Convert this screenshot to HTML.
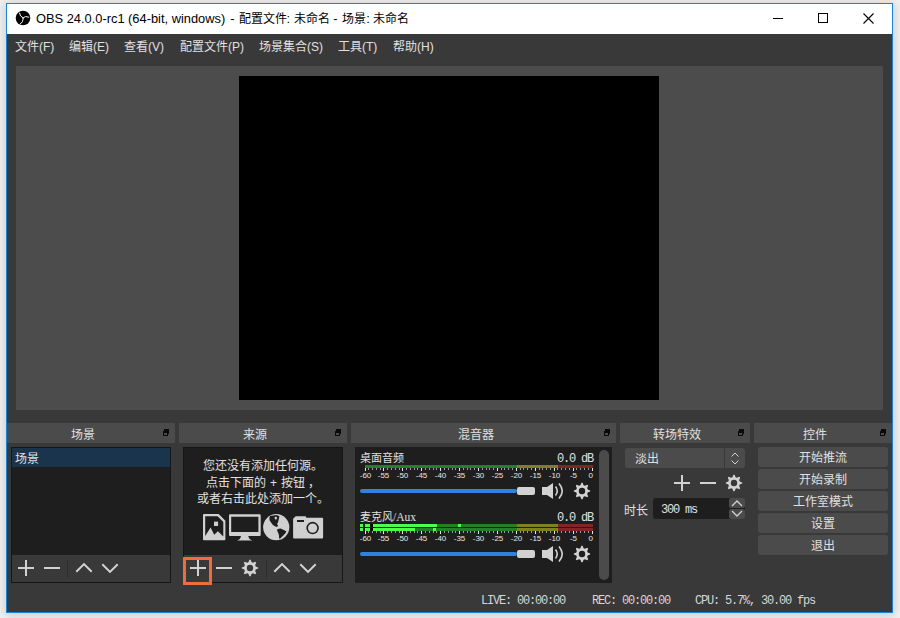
<!DOCTYPE html>
<html lang="zh-CN">
<head>
<meta charset="utf-8">
<style>
*{margin:0;padding:0;box-sizing:border-box;}
html,body{width:900px;height:618px;overflow:hidden;}
body{background:#f0f0f0;font-family:"Liberation Sans",sans-serif;font-size:12px;color:#e1e0e1;position:relative;}
.a{position:absolute;white-space:nowrap;}
#win{left:6px;top:3px;width:887px;height:610px;border:1px solid #1883d7;background:#3a393a;box-shadow:0 1px 9px 1px rgba(0,0,0,0.16);}
#title{left:7px;top:4px;width:885px;height:30px;background:#fff;color:#000;}
#title .t{left:29px;top:5px;font-size:12.85px;}
#title .c{font-size:12px;}
.menu{top:36.5px;font-size:12px;color:#e1e0e1;}
#pv{left:16px;top:66px;width:867px;height:344px;background:#4c4c4c;}
#pvb{left:239px;top:76px;width:420px;height:324px;background:#000;}
.dt{top:423px;height:20px;background:#4b4b4b;font-size:12px;color:#e1e0e1;}
.dt span{position:absolute;left:0;right:16px;top:2px;text-align:center;}
.list{top:447px;height:136px;background:#1f1e1f;border:1px solid #161616;}
.tb{top:555px;height:28px;background:#3a393a;border:1px solid #161616;border-top:none;}
.btn{left:758px;width:130px;height:20px;background:#4b4b4b;border-radius:3px;text-align:center;line-height:23px;color:#e1e0e1;}
.mono{font-family:"Liberation Mono",monospace;}
.st{top:594px;font-size:12px;letter-spacing:-1.2px;color:#d6d6d6;}
svg.full{position:absolute;left:0;top:0;}
svg text{font-family:"Liberation Sans",sans-serif;}
.src{left:183px;width:160px;text-align:center;font-size:12px;color:#e1e0e1;}
</style>
</head>
<body>
<div class="a" id="win"></div>
<div class="a" id="title">
  <div class="a t">OBS 24.0.0-rc1 (64-bit, windows) <span style="margin-left:1.5px">-</span> <span class="c" style="margin-left:0.5px">配置文件</span>: <span class="c">未命名</span> - <span class="c" style="margin-left:1px">场景</span>: <span class="c">未命名</span></div>
</div>
<div class="a menu" style="left:15px">文件(F)</div>
<div class="a menu" style="left:69px">编辑(E)</div>
<div class="a menu" style="left:124px">查看(V)</div>
<div class="a menu" style="left:180px">配置文件(P)</div>
<div class="a menu" style="left:259px">场景集合(S)</div>
<div class="a menu" style="left:338px">工具(T)</div>
<div class="a menu" style="left:393px">帮助(H)</div>

<div class="a" id="pv"></div>
<div class="a" id="pvb"></div>

<!-- dock titles -->
<div class="a dt" style="left:7px;width:168px"><span>场景</span></div>
<div class="a dt" style="left:179px;width:168px"><span>来源</span></div>
<div class="a dt" style="left:351px;width:265px"><span>混音器</span></div>
<div class="a dt" style="left:620px;width:130px"><span>转场特效</span></div>
<div class="a dt" style="left:754px;width:138px"><span>控件</span></div>

<!-- scenes -->
<div class="a list" style="left:11px;width:160px"></div>
<div class="a" style="left:12px;top:448px;width:158px;height:19px;background:#19344c"></div>
<div class="a" style="left:15px;top:449px">场景</div>
<div class="a tb" style="left:11px;width:160px"></div>

<!-- sources -->
<div class="a list" style="left:183px;width:160px"></div>
<div class="a tb" style="left:183px;width:160px"></div>
<div class="a src" style="top:456px">您还没有添加任何源。</div>
<div class="a src" style="top:473px">点击下面的<span style="margin:0 1px"> + </span>按钮<span style="margin-left:3px">，</span></div>
<div class="a src" style="top:489px">或者右击此处添加一个。</div>

<!-- mixer -->
<div class="a list" style="left:355px;width:257px;height:136px;border:none"></div>
<div class="a" style="left:599px;top:450px;width:10px;height:130px;border-radius:5px;background:#4b4b4b"></div>
<div class="a" style="left:360px;top:449px;font-size:11px">桌面音频</div>
<div class="a" style="left:360px;top:508px;font-size:11px">麦克风<span style="font-family:'Liberation Serif',serif;font-size:11.5px">/Aux</span></div>
<div class="a mono" style="left:557px;top:451.5px;font-size:12px;letter-spacing:-1.2px">0.0 dB</div>
<div class="a mono" style="left:557px;top:510.5px;font-size:12px;letter-spacing:-1.2px">0.0 dB</div>

<!-- transitions -->
<div class="a" style="left:625px;top:448px;width:120px;height:20px;background:#4b4b4b;border-radius:3px"></div>
<div class="a" style="left:724px;top:448px;width:1px;height:20px;background:#3a393a"></div>
<div class="a" style="left:635px;top:449px">淡出</div>
<div class="a" style="left:624px;top:501px">时长</div>
<div class="a" style="left:653px;top:498px;width:92px;height:21px;background:#1f1e1f;border-radius:3px"></div>
<div class="a" style="left:729px;top:498px;width:16px;height:10px;background:#4b4b4b;border-radius:2px"></div>
<div class="a" style="left:729px;top:509px;width:16px;height:10px;background:#4b4b4b;border-radius:2px"></div>
<div class="a mono" style="left:661px;top:503px;font-size:12px;letter-spacing:-1.2px">300 ms</div>

<!-- controls -->
<div class="a btn" style="top:447px">开始推流</div>
<div class="a btn" style="top:469px">开始录制</div>
<div class="a btn" style="top:491px">工作室模式</div>
<div class="a btn" style="top:513px">设置</div>
<div class="a btn" style="top:535px">退出</div>

<div class="a mono st" style="left:481px">LIVE: 00:00:00</div>
<div class="a mono st" style="left:592px">REC: 00:00:00</div>
<div class="a mono st" style="left:695px">CPU: 5.7%, 30.00 fps</div>

<!-- orange highlight -->
<div class="a" style="left:183px;top:557px;width:29px;height:28px;border:3px solid #f26b3a"></div>

<svg class="full" width="900" height="618" viewBox="0 0 900 618">
  <!-- obs logo -->
  <circle cx="23" cy="18" r="7.3" fill="#000"/>
  <g stroke="#fff" stroke-width="1" fill="none" stroke-linecap="round">
    <path d="M23 17.9 Q19.9 16.6 19.4 13"/>
    <path d="M23 17.9 Q25 15.4 28.8 17.1"/>
    <path d="M23 17.9 Q23.5 22.4 20.2 23.9"/>
  </g>
  <!-- window buttons -->
  <rect x="773" y="18" width="10" height="1" fill="#000"/>
  <rect x="818.5" y="13.5" width="9" height="9" fill="none" stroke="#000"/>
  <path d="M863.5 13.5L873.5 23.5M873.5 13.5L863.5 23.5" stroke="#000" stroke-width="1.1"/>
  <!-- float icons -->
  <g fill="#0a0a0a">
    <rect x="164" y="429" width="5" height="2"/><rect x="168" y="429" width="1" height="5"/>
    <path d="M163 431h5v5h-5Z M164 433v2h3v-2Z" fill-rule="evenodd"/>
    <rect x="336" y="429" width="5" height="2"/><rect x="340" y="429" width="1" height="5"/>
    <path d="M335 431h5v5h-5Z M336 433v2h3v-2Z" fill-rule="evenodd"/>
    <rect x="605" y="429" width="5" height="2"/><rect x="609" y="429" width="1" height="5"/>
    <path d="M604 431h5v5h-5Z M605 433v2h3v-2Z" fill-rule="evenodd"/>
    <rect x="739" y="429" width="5" height="2"/><rect x="743" y="429" width="1" height="5"/>
    <path d="M738 431h5v5h-5Z M739 433v2h3v-2Z" fill-rule="evenodd"/>
    <rect x="881" y="429" width="5" height="2"/><rect x="885" y="429" width="1" height="5"/>
    <path d="M880 431h5v5h-5Z M881 433v2h3v-2Z" fill-rule="evenodd"/>
  </g>
  <!-- mixer -->
  <g font-size="8" fill="#e6e6e6">
  <rect x="365" y="465" width="152" height="3" fill="#267f26"/>
<rect x="517" y="465" width="41" height="3" fill="#7f7f26"/>
<rect x="558" y="465" width="35" height="3" fill="#7f2626"/>
<rect x="365" y="468" width="1" height="3" fill="#e6e6e6"/>
<rect x="368" y="468" width="1" height="2" fill="#9a9a9a"/>
<rect x="372" y="468" width="1" height="2" fill="#9a9a9a"/>
<rect x="376" y="468" width="1" height="2" fill="#9a9a9a"/>
<rect x="380" y="468" width="1" height="2" fill="#9a9a9a"/>
<rect x="383" y="468" width="1" height="3" fill="#e6e6e6"/>
<rect x="387" y="468" width="1" height="2" fill="#9a9a9a"/>
<rect x="391" y="468" width="1" height="2" fill="#9a9a9a"/>
<rect x="395" y="468" width="1" height="2" fill="#9a9a9a"/>
<rect x="399" y="468" width="1" height="2" fill="#9a9a9a"/>
<rect x="402" y="468" width="1" height="3" fill="#e6e6e6"/>
<rect x="406" y="468" width="1" height="2" fill="#9a9a9a"/>
<rect x="410" y="468" width="1" height="2" fill="#9a9a9a"/>
<rect x="414" y="468" width="1" height="2" fill="#9a9a9a"/>
<rect x="417" y="468" width="1" height="2" fill="#9a9a9a"/>
<rect x="421" y="468" width="1" height="3" fill="#e6e6e6"/>
<rect x="425" y="468" width="1" height="2" fill="#9a9a9a"/>
<rect x="429" y="468" width="1" height="2" fill="#9a9a9a"/>
<rect x="433" y="468" width="1" height="2" fill="#9a9a9a"/>
<rect x="436" y="468" width="1" height="2" fill="#9a9a9a"/>
<rect x="440" y="468" width="1" height="3" fill="#e6e6e6"/>
<rect x="444" y="468" width="1" height="2" fill="#9a9a9a"/>
<rect x="448" y="468" width="1" height="2" fill="#9a9a9a"/>
<rect x="452" y="468" width="1" height="2" fill="#9a9a9a"/>
<rect x="455" y="468" width="1" height="2" fill="#9a9a9a"/>
<rect x="459" y="468" width="1" height="3" fill="#e6e6e6"/>
<rect x="463" y="468" width="1" height="2" fill="#9a9a9a"/>
<rect x="467" y="468" width="1" height="2" fill="#9a9a9a"/>
<rect x="470" y="468" width="1" height="2" fill="#9a9a9a"/>
<rect x="474" y="468" width="1" height="2" fill="#9a9a9a"/>
<rect x="478" y="468" width="1" height="3" fill="#e6e6e6"/>
<rect x="482" y="468" width="1" height="2" fill="#9a9a9a"/>
<rect x="486" y="468" width="1" height="2" fill="#9a9a9a"/>
<rect x="489" y="468" width="1" height="2" fill="#9a9a9a"/>
<rect x="493" y="468" width="1" height="2" fill="#9a9a9a"/>
<rect x="497" y="468" width="1" height="3" fill="#e6e6e6"/>
<rect x="501" y="468" width="1" height="2" fill="#9a9a9a"/>
<rect x="504" y="468" width="1" height="2" fill="#9a9a9a"/>
<rect x="508" y="468" width="1" height="2" fill="#9a9a9a"/>
<rect x="512" y="468" width="1" height="2" fill="#9a9a9a"/>
<rect x="516" y="468" width="1" height="3" fill="#e6e6e6"/>
<rect x="520" y="468" width="1" height="2" fill="#9a9a9a"/>
<rect x="523" y="468" width="1" height="2" fill="#9a9a9a"/>
<rect x="527" y="468" width="1" height="2" fill="#9a9a9a"/>
<rect x="531" y="468" width="1" height="2" fill="#9a9a9a"/>
<rect x="535" y="468" width="1" height="3" fill="#e6e6e6"/>
<rect x="539" y="468" width="1" height="2" fill="#9a9a9a"/>
<rect x="542" y="468" width="1" height="2" fill="#9a9a9a"/>
<rect x="546" y="468" width="1" height="2" fill="#9a9a9a"/>
<rect x="550" y="468" width="1" height="2" fill="#9a9a9a"/>
<rect x="554" y="468" width="1" height="3" fill="#e6e6e6"/>
<rect x="557" y="468" width="1" height="2" fill="#9a9a9a"/>
<rect x="561" y="468" width="1" height="2" fill="#9a9a9a"/>
<rect x="565" y="468" width="1" height="2" fill="#9a9a9a"/>
<rect x="569" y="468" width="1" height="2" fill="#9a9a9a"/>
<rect x="573" y="468" width="1" height="3" fill="#e6e6e6"/>
<rect x="576" y="468" width="1" height="2" fill="#9a9a9a"/>
<rect x="580" y="468" width="1" height="2" fill="#9a9a9a"/>
<rect x="584" y="468" width="1" height="2" fill="#9a9a9a"/>
<rect x="588" y="468" width="1" height="2" fill="#9a9a9a"/>
<rect x="592" y="468" width="1" height="3" fill="#e6e6e6"/>
<text x="365.5" y="478" text-anchor="middle">-60</text>
<text x="383.5" y="478" text-anchor="middle">-55</text>
<text x="402.5" y="478" text-anchor="middle">-50</text>
<text x="421.5" y="478" text-anchor="middle">-45</text>
<text x="440.5" y="478" text-anchor="middle">-40</text>
<text x="459.5" y="478" text-anchor="middle">-35</text>
<text x="478.5" y="478" text-anchor="middle">-30</text>
<text x="497.5" y="478" text-anchor="middle">-25</text>
<text x="516.5" y="478" text-anchor="middle">-20</text>
<text x="535.5" y="478" text-anchor="middle">-15</text>
<text x="554.5" y="478" text-anchor="middle">-10</text>
<text x="573.5" y="478" text-anchor="middle">-5</text>
<text x="593" y="478" text-anchor="end">0</text>
<rect x="365" y="524" width="152" height="3" fill="#267f26"/>
<rect x="517" y="524" width="41" height="3" fill="#7f7f26"/>
<rect x="558" y="524" width="35" height="3" fill="#7f2626"/>
<rect x="365" y="528" width="152" height="3" fill="#267f26"/>
<rect x="517" y="528" width="41" height="3" fill="#7f7f26"/>
<rect x="558" y="528" width="35" height="3" fill="#7f2626"/>
<rect x="373" y="524" width="64" height="3" fill="#4cff4c"/>
<rect x="373" y="528" width="42" height="3" fill="#4cff4c"/>
<rect x="458" y="524" width="3" height="3" fill="#4cff4c"/>
<rect x="433" y="528" width="3" height="3" fill="#4cff4c"/>
<rect x="365" y="524" width="5" height="3" fill="#4cff4c"/>
<rect x="365" y="528" width="5" height="3" fill="#4cff4c"/>
<rect x="370" y="524" width="3" height="3" fill="#000000"/>
<rect x="370" y="528" width="3" height="3" fill="#000000"/>
<rect x="360" y="524" width="3" height="3" fill="#4cff4c"/>
<rect x="360" y="528" width="3" height="3" fill="#4cff4c"/>
<rect x="365" y="531" width="1" height="3" fill="#e6e6e6"/>
<rect x="368" y="531" width="1" height="2" fill="#9a9a9a"/>
<rect x="372" y="531" width="1" height="2" fill="#9a9a9a"/>
<rect x="376" y="531" width="1" height="2" fill="#9a9a9a"/>
<rect x="380" y="531" width="1" height="2" fill="#9a9a9a"/>
<rect x="383" y="531" width="1" height="3" fill="#e6e6e6"/>
<rect x="387" y="531" width="1" height="2" fill="#9a9a9a"/>
<rect x="391" y="531" width="1" height="2" fill="#9a9a9a"/>
<rect x="395" y="531" width="1" height="2" fill="#9a9a9a"/>
<rect x="399" y="531" width="1" height="2" fill="#9a9a9a"/>
<rect x="402" y="531" width="1" height="3" fill="#e6e6e6"/>
<rect x="406" y="531" width="1" height="2" fill="#9a9a9a"/>
<rect x="410" y="531" width="1" height="2" fill="#9a9a9a"/>
<rect x="414" y="531" width="1" height="2" fill="#9a9a9a"/>
<rect x="417" y="531" width="1" height="2" fill="#9a9a9a"/>
<rect x="421" y="531" width="1" height="3" fill="#e6e6e6"/>
<rect x="425" y="531" width="1" height="2" fill="#9a9a9a"/>
<rect x="429" y="531" width="1" height="2" fill="#9a9a9a"/>
<rect x="433" y="531" width="1" height="2" fill="#9a9a9a"/>
<rect x="436" y="531" width="1" height="2" fill="#9a9a9a"/>
<rect x="440" y="531" width="1" height="3" fill="#e6e6e6"/>
<rect x="444" y="531" width="1" height="2" fill="#9a9a9a"/>
<rect x="448" y="531" width="1" height="2" fill="#9a9a9a"/>
<rect x="452" y="531" width="1" height="2" fill="#9a9a9a"/>
<rect x="455" y="531" width="1" height="2" fill="#9a9a9a"/>
<rect x="459" y="531" width="1" height="3" fill="#e6e6e6"/>
<rect x="463" y="531" width="1" height="2" fill="#9a9a9a"/>
<rect x="467" y="531" width="1" height="2" fill="#9a9a9a"/>
<rect x="470" y="531" width="1" height="2" fill="#9a9a9a"/>
<rect x="474" y="531" width="1" height="2" fill="#9a9a9a"/>
<rect x="478" y="531" width="1" height="3" fill="#e6e6e6"/>
<rect x="482" y="531" width="1" height="2" fill="#9a9a9a"/>
<rect x="486" y="531" width="1" height="2" fill="#9a9a9a"/>
<rect x="489" y="531" width="1" height="2" fill="#9a9a9a"/>
<rect x="493" y="531" width="1" height="2" fill="#9a9a9a"/>
<rect x="497" y="531" width="1" height="3" fill="#e6e6e6"/>
<rect x="501" y="531" width="1" height="2" fill="#9a9a9a"/>
<rect x="504" y="531" width="1" height="2" fill="#9a9a9a"/>
<rect x="508" y="531" width="1" height="2" fill="#9a9a9a"/>
<rect x="512" y="531" width="1" height="2" fill="#9a9a9a"/>
<rect x="516" y="531" width="1" height="3" fill="#e6e6e6"/>
<rect x="520" y="531" width="1" height="2" fill="#9a9a9a"/>
<rect x="523" y="531" width="1" height="2" fill="#9a9a9a"/>
<rect x="527" y="531" width="1" height="2" fill="#9a9a9a"/>
<rect x="531" y="531" width="1" height="2" fill="#9a9a9a"/>
<rect x="535" y="531" width="1" height="3" fill="#e6e6e6"/>
<rect x="539" y="531" width="1" height="2" fill="#9a9a9a"/>
<rect x="542" y="531" width="1" height="2" fill="#9a9a9a"/>
<rect x="546" y="531" width="1" height="2" fill="#9a9a9a"/>
<rect x="550" y="531" width="1" height="2" fill="#9a9a9a"/>
<rect x="554" y="531" width="1" height="3" fill="#e6e6e6"/>
<rect x="557" y="531" width="1" height="2" fill="#9a9a9a"/>
<rect x="561" y="531" width="1" height="2" fill="#9a9a9a"/>
<rect x="565" y="531" width="1" height="2" fill="#9a9a9a"/>
<rect x="569" y="531" width="1" height="2" fill="#9a9a9a"/>
<rect x="573" y="531" width="1" height="3" fill="#e6e6e6"/>
<rect x="576" y="531" width="1" height="2" fill="#9a9a9a"/>
<rect x="580" y="531" width="1" height="2" fill="#9a9a9a"/>
<rect x="584" y="531" width="1" height="2" fill="#9a9a9a"/>
<rect x="588" y="531" width="1" height="2" fill="#9a9a9a"/>
<rect x="592" y="531" width="1" height="3" fill="#e6e6e6"/>
<text x="365.5" y="541" text-anchor="middle">-60</text>
<text x="383.5" y="541" text-anchor="middle">-55</text>
<text x="402.5" y="541" text-anchor="middle">-50</text>
<text x="421.5" y="541" text-anchor="middle">-45</text>
<text x="440.5" y="541" text-anchor="middle">-40</text>
<text x="459.5" y="541" text-anchor="middle">-35</text>
<text x="478.5" y="541" text-anchor="middle">-30</text>
<text x="497.5" y="541" text-anchor="middle">-25</text>
<text x="516.5" y="541" text-anchor="middle">-20</text>
<text x="535.5" y="541" text-anchor="middle">-15</text>
<text x="554.5" y="541" text-anchor="middle">-10</text>
<text x="573.5" y="541" text-anchor="middle">-5</text>
<text x="593" y="541" text-anchor="end">0</text>
  </g>
  <rect x="360" y="489" width="157" height="4" rx="2" fill="#2d83de"/>
  <rect x="517" y="487" width="18" height="8" rx="2" fill="#d2d2d2"/>
  <rect x="360" y="552" width="157" height="4" rx="2" fill="#2d83de"/>
  <rect x="517" y="550" width="18" height="8" rx="2" fill="#d2d2d2"/>
  <path d="M542 487H547L553 483V499L547 495H542Z" fill="#d2d2d2"/><path d="M555.5 486.5Q559 491 555.5 495.5" fill="none" stroke="#d2d2d2" stroke-width="1.6"/><path d="M559 483.5Q565.5 491 559 498.5" fill="none" stroke="#d2d2d2" stroke-width="1.6"/>
  <path d="M542 550H547L553 546V562L547 558H542Z" fill="#d2d2d2"/><path d="M555.5 549.5Q559 554 555.5 558.5" fill="none" stroke="#d2d2d2" stroke-width="1.6"/><path d="M559 546.5Q565.5 554 559 561.5" fill="none" stroke="#d2d2d2" stroke-width="1.6"/>
  <path d="M580.40 485.32 L581.42 482.82 L582.58 482.82 L583.60 485.32 L584.88 485.85 L587.37 484.81 L588.19 485.63 L587.15 488.12 L587.68 489.40 L590.18 490.42 L590.18 491.58 L587.68 492.60 L587.15 493.88 L588.19 496.37 L587.37 497.19 L584.88 496.15 L583.60 496.68 L582.58 499.18 L581.42 499.18 L580.40 496.68 L579.12 496.15 L576.63 497.19 L575.81 496.37 L576.85 493.88 L576.32 492.60 L573.82 491.58 L573.82 490.42 L576.32 489.40 L576.85 488.12 L575.81 485.63 L576.63 484.81 L579.12 485.85Z M585.20 491.00 A3.2 3.2 0 1 0 578.80 491.00 A3.2 3.2 0 1 0 585.20 491.00Z" fill="#d2d2d2" fill-rule="evenodd"/>
  <path d="M580.40 548.32 L581.42 545.82 L582.58 545.82 L583.60 548.32 L584.88 548.85 L587.37 547.81 L588.19 548.63 L587.15 551.12 L587.68 552.40 L590.18 553.42 L590.18 554.58 L587.68 555.60 L587.15 556.88 L588.19 559.37 L587.37 560.19 L584.88 559.15 L583.60 559.68 L582.58 562.18 L581.42 562.18 L580.40 559.68 L579.12 559.15 L576.63 560.19 L575.81 559.37 L576.85 556.88 L576.32 555.60 L573.82 554.58 L573.82 553.42 L576.32 552.40 L576.85 551.12 L575.81 548.63 L576.63 547.81 L579.12 548.85Z M585.20 554.00 A3.2 3.2 0 1 0 578.80 554.00 A3.2 3.2 0 1 0 585.20 554.00Z" fill="#d2d2d2" fill-rule="evenodd"/>
  <!-- toolbars -->
  <path d="M26.0 560V576M18 568.0H34" stroke="#d2d2d2" stroke-width="2" fill="none"/><path d="M44 568.0H60" stroke="#d2d2d2" stroke-width="2" fill="none"/><path d="M76.3 571.8L84 564.1L91.7 571.8" stroke="#d2d2d2" stroke-width="2" fill="none"/><path d="M102.3 564.2L110 571.9L117.7 564.2" stroke="#d2d2d2" stroke-width="2" fill="none"/>
  <path d="M198.0 560V576M190 568.0H206" stroke="#d2d2d2" stroke-width="2" fill="none"/><path d="M216 568.0H232" stroke="#d2d2d2" stroke-width="2" fill="none"/><path d="M248.40 562.32 L249.42 559.82 L250.58 559.82 L251.60 562.32 L252.88 562.85 L255.37 561.81 L256.19 562.63 L255.15 565.12 L255.68 566.40 L258.18 567.42 L258.18 568.58 L255.68 569.60 L255.15 570.88 L256.19 573.37 L255.37 574.19 L252.88 573.15 L251.60 573.68 L250.58 576.18 L249.42 576.18 L248.40 573.68 L247.12 573.15 L244.63 574.19 L243.81 573.37 L244.85 570.88 L244.32 569.60 L241.82 568.58 L241.82 567.42 L244.32 566.40 L244.85 565.12 L243.81 562.63 L244.63 561.81 L247.12 562.85Z M253.20 568.00 A3.2 3.2 0 1 0 246.80 568.00 A3.2 3.2 0 1 0 253.20 568.00Z" fill="#d2d2d2" fill-rule="evenodd"/><path d="M274.3 571.8L282 564.1L289.7 571.8" stroke="#d2d2d2" stroke-width="2" fill="none"/><path d="M300.3 564.2L308 571.9L315.7 564.2" stroke="#d2d2d2" stroke-width="2" fill="none"/>
  <rect x="67" y="559" width="1" height="19" fill="#2e2e2e"/>
  <rect x="266" y="559" width="1" height="19" fill="#2e2e2e"/>
  <path d="M682.0 475V491M674 483.0H690" stroke="#d2d2d2" stroke-width="2" fill="none"/><path d="M700 483.0H716" stroke="#d2d2d2" stroke-width="2" fill="none"/><path d="M732.40 477.32 L733.42 474.82 L734.58 474.82 L735.60 477.32 L736.88 477.85 L739.37 476.81 L740.19 477.63 L739.15 480.12 L739.68 481.40 L742.18 482.42 L742.18 483.58 L739.68 484.60 L739.15 485.88 L740.19 488.37 L739.37 489.19 L736.88 488.15 L735.60 488.68 L734.58 491.18 L733.42 491.18 L732.40 488.68 L731.12 488.15 L728.63 489.19 L727.81 488.37 L728.85 485.88 L728.32 484.60 L725.82 483.58 L725.82 482.42 L728.32 481.40 L728.85 480.12 L727.81 477.63 L728.63 476.81 L731.12 477.85Z M737.20 483.00 A3.2 3.2 0 1 0 730.80 483.00 A3.2 3.2 0 1 0 737.20 483.00Z" fill="#d2d2d2" fill-rule="evenodd"/>
  <!-- combo arrows -->
  <path d="M731.5 456.5L735 453L738.5 456.5M731.5 460.5L735 464L738.5 460.5" stroke="#d2d2d2" stroke-width="1" fill="none"/>
  <path d="M732 506L737 501L742 506M732 511L737 516L742 511" stroke="#d2d2d2" stroke-width="1.3" fill="none"/>
  <!-- source icons -->
  <g fill="#d0d0d0">
    <path d="M204 514.1H218.7L225.4 520.8V539.3Q225.4 540.3 224.4 540.3H204Q203 540.3 203 539.3V515.1Q203 514.1 204 514.1Z M205.2 516.2V535.9L210.6 527.6L214.2 534.8L217.9 531.2L223.3 536.4V521.9L217.6 516.2Z" fill-rule="evenodd"/>
    <rect x="214" y="521.6" width="4.1" height="4.4"/>
    <path d="M230 514.2H259.7Q260.7 514.2 260.7 515.2V535.1Q260.7 536.1 259.7 536.1H230Q229 536.1 229 535.1V515.2Q229 514.2 230 514.2Z M231.2 516.7V532H258.4V516.7Z" fill-rule="evenodd"/>
    <path d="M241 536H248.3Q248.8 539.5 252.4 540.5H237.1Q240.5 539.5 241 536Z"/>
    <circle cx="276.25" cy="527.2" r="13.1"/>
    <path d="M293.1 518.8L295.7 516.2H305.6L306.4 517.7H322.1Q323.1 517.7 323.1 518.7V537.5Q323.1 538.5 322.1 538.5H294.1Q293.1 538.5 293.1 537.5Z"/>
  </g>
  <g fill="#1f1e1f">
    <path d="M270.1 515.9L276.5 514.9L279.4 516.2L278.9 518.8L278.1 521.9L277.1 524L278.1 526L276.5 527.1L274.5 526L272.9 525L271.4 522.9L269.5 520.3L269.5 517.2Z"/>
    <path d="M277.6 528.9L280.7 528.4L284.3 530.2L286.4 531.2L285.4 533.3L283.3 535.4L281.2 537.4L279.7 539.2L279.1 537.4L278.9 534.8L277.6 531.7L277.1 530.2Z"/>
    <rect x="297" y="520" width="7" height="2"/>
  </g>
  <ellipse cx="275.8" cy="517.9" rx="1.2" ry="1.5" fill="#d0d0d0"/>
  <circle cx="312.6" cy="528.1" r="5.45" fill="none" stroke="#1f1e1f" stroke-width="1.6"/>
</svg>
</body>
</html>
